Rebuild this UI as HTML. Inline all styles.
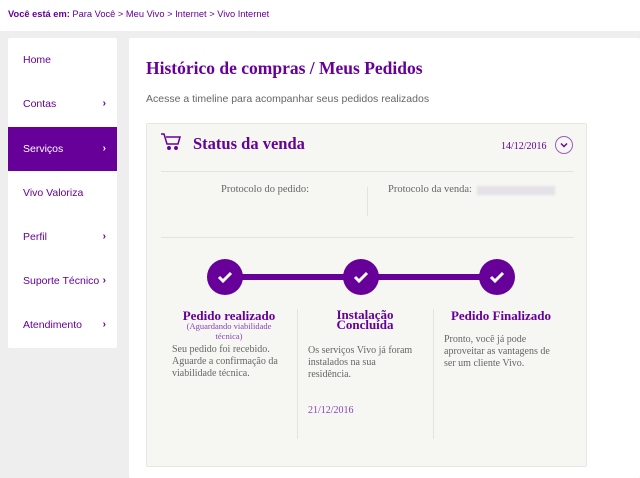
<!DOCTYPE html>
<html><head><meta charset="utf-8"><style>
*{margin:0;padding:0;box-sizing:border-box}
body{width:640px;height:473px;overflow:hidden;background:#eeeeee;font-family:"Liberation Sans",sans-serif;position:relative}
.top{position:absolute;left:0;top:0;width:640px;height:31px;background:#fff;font-size:9.3px;color:#660099;padding:9px 0 0 8px}
.side{position:absolute;left:8px;top:38px;width:109px;height:310px;background:#fff;border-radius:2px}
.side div{position:absolute;left:0;width:109px;height:44px;font-size:10.5px;color:#660099;padding-left:15px;line-height:44px}
.side .a{background:#660099;color:#fff}
.side span{position:absolute;right:11px;font-weight:bold;font-size:10px}
.main{position:absolute;left:129px;top:38px;width:511px;height:440px;background:#fff;border-radius:2px}
.serif{font-family:"Liberation Serif",serif}
h1{position:absolute;left:17px;top:20px;font-size:17.5px;color:#660099;font-weight:bold;font-family:"Liberation Serif",serif}
.sub{position:absolute;left:17px;top:55px;font-size:10.5px;color:#666}
.card{position:absolute;left:17px;top:85px;width:441px;height:344px;background:#f6f6f3;border:1px solid #e6e6e2;border-radius:2px}
.hl{position:absolute;left:14px;width:413px;height:1px;background:#e3e3df}
.t{position:absolute;font-family:"Liberation Serif",serif;font-size:10px;color:#666;line-height:12px}
.ct{position:absolute;font-family:"Liberation Serif",serif;font-weight:bold;color:#660099;font-size:13px;text-align:center;line-height:11px}
.c{position:absolute;width:36px;height:36px;border-radius:50%;background:#660099;top:135px}
.vl{position:absolute;width:1px;background:#e3e3df}
</style></head><body>
<div class="top"><b>Você está em:</b> Para Você &gt; Meu Vivo &gt; Internet &gt; Vivo Internet</div>
<div class="side">
<div style="top:0">Home</div>
<div style="top:44px">Contas<span>›</span></div>
<div class="a" style="top:89px">Serviços<span>›</span></div>
<div style="top:133px">Vivo Valoriza</div>
<div style="top:177px">Perfil<span>›</span></div>
<div style="top:221px">Suporte Técnico<span>›</span></div>
<div style="top:265px">Atendimento<span>›</span></div>
</div>
<div class="main">
<h1>Histórico de compras / Meus Pedidos</h1>
<div class="sub">Acesse a timeline para acompanhar seus pedidos realizados</div>
<div class="card">
<svg style="position:absolute;left:13px;top:9px" width="22" height="18" viewBox="0 0 22 18" fill="none" stroke="#660099" stroke-width="1.5"><path d="M1 1h3l3 10h11l2-7H6"/><circle cx="9" cy="15" r="1.2" fill="#660099"/><circle cx="16" cy="15" r="1.2" fill="#660099"/></svg>
<div class="serif" style="position:absolute;left:46px;top:10px;font-size:16.5px;color:#660099;font-weight:bold">Status da venda</div>
<div class="t" style="left:354px;top:17px;color:#660099;font-size:10px">14/12/2016</div>
<div style="position:absolute;left:408px;top:12px;width:18px;height:18px;border:1.3px solid #9a5fc0;border-radius:50%"><svg width="16" height="16" viewBox="0 0 16 16"><path d="M5 6.5l3 3 3-3" stroke="#660099" stroke-width="1.4" fill="none"/></svg></div>
<div class="hl" style="top:47px"></div>
<div class="t" style="left:74px;top:60px;font-size:10.5px">Protocolo do pedido:</div>
<div class="vl" style="left:220px;top:63px;height:29px"></div>
<div class="t" style="left:241px;top:60px;font-size:10.5px">Protocolo da venda:</div>
<div style="position:absolute;left:330px;top:62px;width:78px;height:9px;background:#e4e2e6;filter:blur(1px)"></div>
<div class="hl" style="top:113px"></div>
<div style="position:absolute;left:78px;top:150px;width:272px;height:6px;background:#660099"></div>
<div class="c" style="left:60px"></div><div class="c" style="left:196px"></div><div class="c" style="left:332px"></div>
<svg style="position:absolute;left:60px;top:135px" width="308" height="36"><g stroke="#fff" stroke-width="3" fill="none"><path d="M12 18l4 4 8-8"/><path d="M148 18l4 4 8-8"/><path d="M284 18l4 4 8-8"/></g></svg>
<div class="vl" style="left:150px;top:185px;height:130px"></div>
<div class="vl" style="left:286px;top:185px;height:130px"></div>
<div class="ct" style="left:20px;top:186px;width:124px">Pedido realizado</div>
<div class="t" style="left:20px;top:197px;width:124px;text-align:center;color:#8844bb;font-size:8.5px;line-height:10px">(Aguardando viabilidade<br>técnica)</div>
<div class="t" style="left:25px;top:220px;width:125px">Seu pedido foi recebido. Aguarde a confirmação da viabilidade técnica.</div>
<div class="ct" style="left:156px;top:186px;width:124px;line-height:10px">Instalação<br>Concluída</div>
<div class="t" style="left:161px;top:221px;width:110px">Os serviços Vivo já foram instalados na sua residência.</div>
<div class="t" style="left:161px;top:281px;color:#8844bb">21/12/2016</div>
<div class="ct" style="left:292px;top:186px;width:124px">Pedido Finalizado</div>
<div class="t" style="left:297px;top:210px;width:115px">Pronto, você já pode aproveitar as vantagens de ser um cliente Vivo.</div>
</div>
</div>
</body></html>
